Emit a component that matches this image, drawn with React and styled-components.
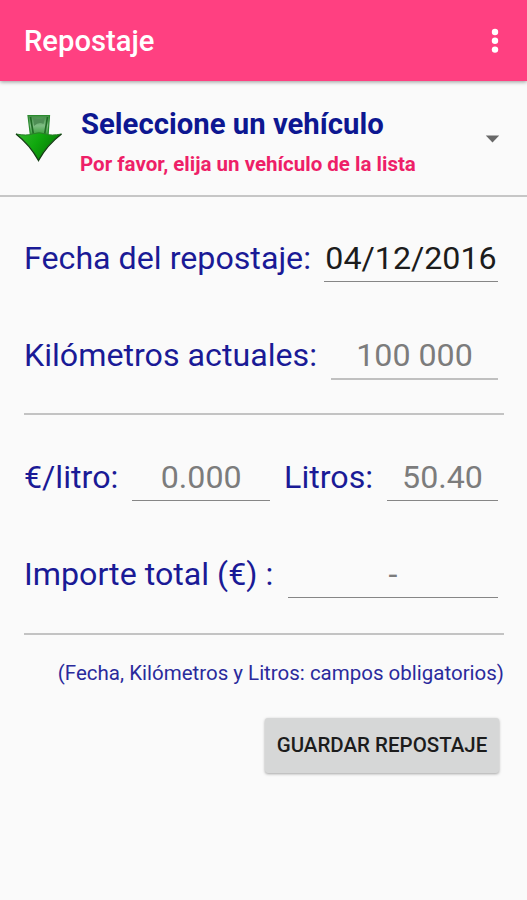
import React, { useState } from "react";
import styled, { createGlobalStyle } from "styled-components";

const GlobalStyle = createGlobalStyle`
  * {
    box-sizing: border-box;
  }

  body {
    margin: 0;
    background: #fafafa;
    font-family: Roboto, "Liberation Sans", sans-serif;
  }
`;

const Screen = styled.div`
  display: flex;
  flex-direction: column;
  min-height: 100vh;
  background: #fafafa;
`;

const AppBar = styled.header`
  display: flex;
  align-items: center;
  justify-content: space-between;
  height: 81px;
  padding: 0 24px;
  background: #ff4081;
  box-shadow: 0 1px 4px rgba(0, 0, 0, 0.4);
  z-index: 1;
`;

const Title = styled.h1`
  margin: 0;
  color: #fff;
  font-size: 29.2px;
  font-weight: 500;
  line-height: 36px;
`;

const MenuButton = styled.button`
  display: flex;
  padding: 0;
  border: 0;
  background: none;
  color: #fff;
`;

const VehicleSelect = styled.div`
  display: flex;
  align-items: center;
  height: 116px;
  padding: 0 27px 0 15px;
  border-bottom: 2px solid #c6c6c6;
`;

const VehicleText = styled.div`
  flex: 1;
  margin-left: 17px;
  padding-top: 12px;
`;

const VehicleName = styled.div`
  padding-left: 1px;
  color: #0d1791;
  font-size: 29.3px;
  font-weight: 700;
  line-height: 40px;
`;

const VehicleHint = styled.div`
  color: #ee1f68;
  font-size: 20.5px;
  font-weight: 700;
  line-height: 40px;
`;

const FormArea = styled.form`
  display: flex;
  flex-direction: column;
  padding: 42px 23px 0 24px;
`;

const FieldRow = styled.div`
  display: flex;
  align-items: baseline;
  justify-content: space-between;
  height: 43px;
  margin-bottom: ${(props) => props.$gap}px;
  padding-right: 6px;
`;

const Label = styled.label`
  color: #1a1a96;
  font-size: 32.2px;
  line-height: 38px;
  white-space: nowrap;
`;

const Input = styled.input`
  width: ${(props) => props.$width}px;
  height: 43px;
  margin: 0;
  padding: 0 0 4px;
  border: 0;
  border-bottom: ${(props) => props.$line || 1}px solid ${(props) => props.$lineColor || "#868686"};
  border-radius: 0;
  outline: none;
  background: none;
  color: #1c1c1c;
  font-family: inherit;
  font-size: 32.2px;
  line-height: 38px;
  text-align: center;

  &::placeholder {
    color: #7c7c7c;
    opacity: 1;
  }
`;

const Divider = styled.hr`
  width: 100%;
  height: 2px;
  margin: 0 0 ${(props) => props.$gap}px;
  border: 0;
  background: #c3c3c3;
`;

const Note = styled.p`
  margin: 0;
  color: #2a2a9c;
  font-size: 20.5px;
  line-height: 28px;
  text-align: right;
  white-space: nowrap;
`;

const SaveButton = styled.button`
  align-self: flex-end;
  width: 234px;
  height: 55px;
  margin: 31px 5px 0 0;
  padding: 0 0 1px;
  border: 0;
  border-radius: 3px;
  background: #d6d7d7;
  box-shadow: 0 1px 3px rgba(0, 0, 0, 0.35);
  color: #1c1c1c;
  font-family: inherit;
  font-size: 20.5px;
  font-weight: 500;
  text-transform: uppercase;
  white-space: nowrap;
`;

const Caret = styled.svg`
  margin-top: 2px;
`;

function DotsIcon() {
  return (
    <svg width="16" height="26" viewBox="0 0 16 26" fill="currentColor">
      <circle cx="8" cy="4" r="3.2" />
      <circle cx="8" cy="12.8" r="3.2" />
      <circle cx="8" cy="21.6" r="3.2" />
    </svg>
  );
}

function ArrowIcon() {
  return (
    <svg width="48" height="48" viewBox="0 0 48 48">
      <defs>
        <linearGradient id="shaft" x1="0" y1="0" x2="0" y2="1">
          <stop offset="0" stopColor="#3f8f43" />
          <stop offset="0.5" stopColor="#7fbd84" />
          <stop offset="1" stopColor="#2d9a2c" />
        </linearGradient>
        <linearGradient id="head" x1="0" y1="0" x2="1" y2="0.4">
          <stop offset="0" stopColor="#35b52f" />
          <stop offset="0.5" stopColor="#10a80e" />
          <stop offset="1" stopColor="#067a06" />
        </linearGradient>
      </defs>
      <path d="M13 1.5H34.5L33 22H15.5Z" fill="url(#shaft)" stroke="#2a8a2e" strokeWidth="1.2" />
      <path d="M15.5 3L18.5 21M32.5 3L29.5 21" stroke="#1f6a24" strokeWidth="1.6" />
      <path d="M18 3.5Q24 6 30 3.5L28.5 10Q24 7 19 12Z" fill="#4f8e55" />
      <path d="M1 20Q12 22 17 20Q24 17.5 31 20Q36 22 46.5 20Q31 31 23.5 46.5Q16 31 1 20Z" fill="url(#head)" />
      <path d="M1 20Q12 22 17 20Q24 17.5 31 20Q36 22 46.5 20" fill="none" stroke="#2c7d2b" strokeWidth="1" />
      <path d="M1 20Q15 31 23.5 46.5Q32 31 46.5 20" fill="none" stroke="#123d12" strokeWidth="1.4" />
    </svg>
  );
}

function CaretIcon() {
  return (
    <Caret width="15" height="8" viewBox="0 0 15 8">
      <path d="M0.8 0.5H14.2L7.5 7.5Z" fill="#686868" />
    </Caret>
  );
}

function App() {
  const [date, setDate] = useState("04/12/2016");
  const [km, setKm] = useState("");
  const [price, setPrice] = useState("");
  const [liters, setLiters] = useState("");

  const handleSubmit = (e) => {
    e.preventDefault();
  };

  return (
    <Screen>
      <GlobalStyle />
      <AppBar>
        <Title>Repostaje</Title>
        <MenuButton type="button" aria-label="Menú">
          <DotsIcon />
        </MenuButton>
      </AppBar>

      <VehicleSelect>
        <ArrowIcon />
        <VehicleText>
          <VehicleName>Seleccione un vehículo</VehicleName>
          <VehicleHint>Por favor, elija un vehículo de la lista</VehicleHint>
        </VehicleText>
        <CaretIcon />
      </VehicleSelect>

      <FormArea onSubmit={handleSubmit}>
        <FieldRow $gap={54}>
          <Label htmlFor="date">Fecha del repostaje:</Label>
          <Input id="date" $width={174} value={date} onChange={(e) => setDate(e.target.value)} />
        </FieldRow>
        <FieldRow $gap={34}>
          <Label htmlFor="km">Kilómetros actuales:</Label>
          <Input
            id="km"
            $width={167}
            $line={2}
            $lineColor="#c0c0c0"
            placeholder="100 000"
            value={km}
            onChange={(e) => setKm(e.target.value)}
          />
        </FieldRow>

        <Divider $gap={43} />

        <FieldRow $gap={54}>
          <Label htmlFor="price">€/litro:</Label>
          <Input
            id="price"
            $width={138}
            placeholder="0.000"
            value={price}
            onChange={(e) => setPrice(e.target.value)}
          />
          <Label htmlFor="liters">Litros:</Label>
          <Input
            id="liters"
            $width={111}
            placeholder="50.40"
            value={liters}
            onChange={(e) => setLiters(e.target.value)}
          />
        </FieldRow>
        <FieldRow $gap={35}>
          <Label htmlFor="total">Importe total (€) :</Label>
          <Input id="total" $width={210} placeholder="-" readOnly />
        </FieldRow>

        <Divider $gap={24} />

        <Note>(Fecha, Kilómetros y Litros: campos obligatorios)</Note>
        <SaveButton type="submit">Guardar repostaje</SaveButton>
      </FormArea>
    </Screen>
  );
}

export default App;
